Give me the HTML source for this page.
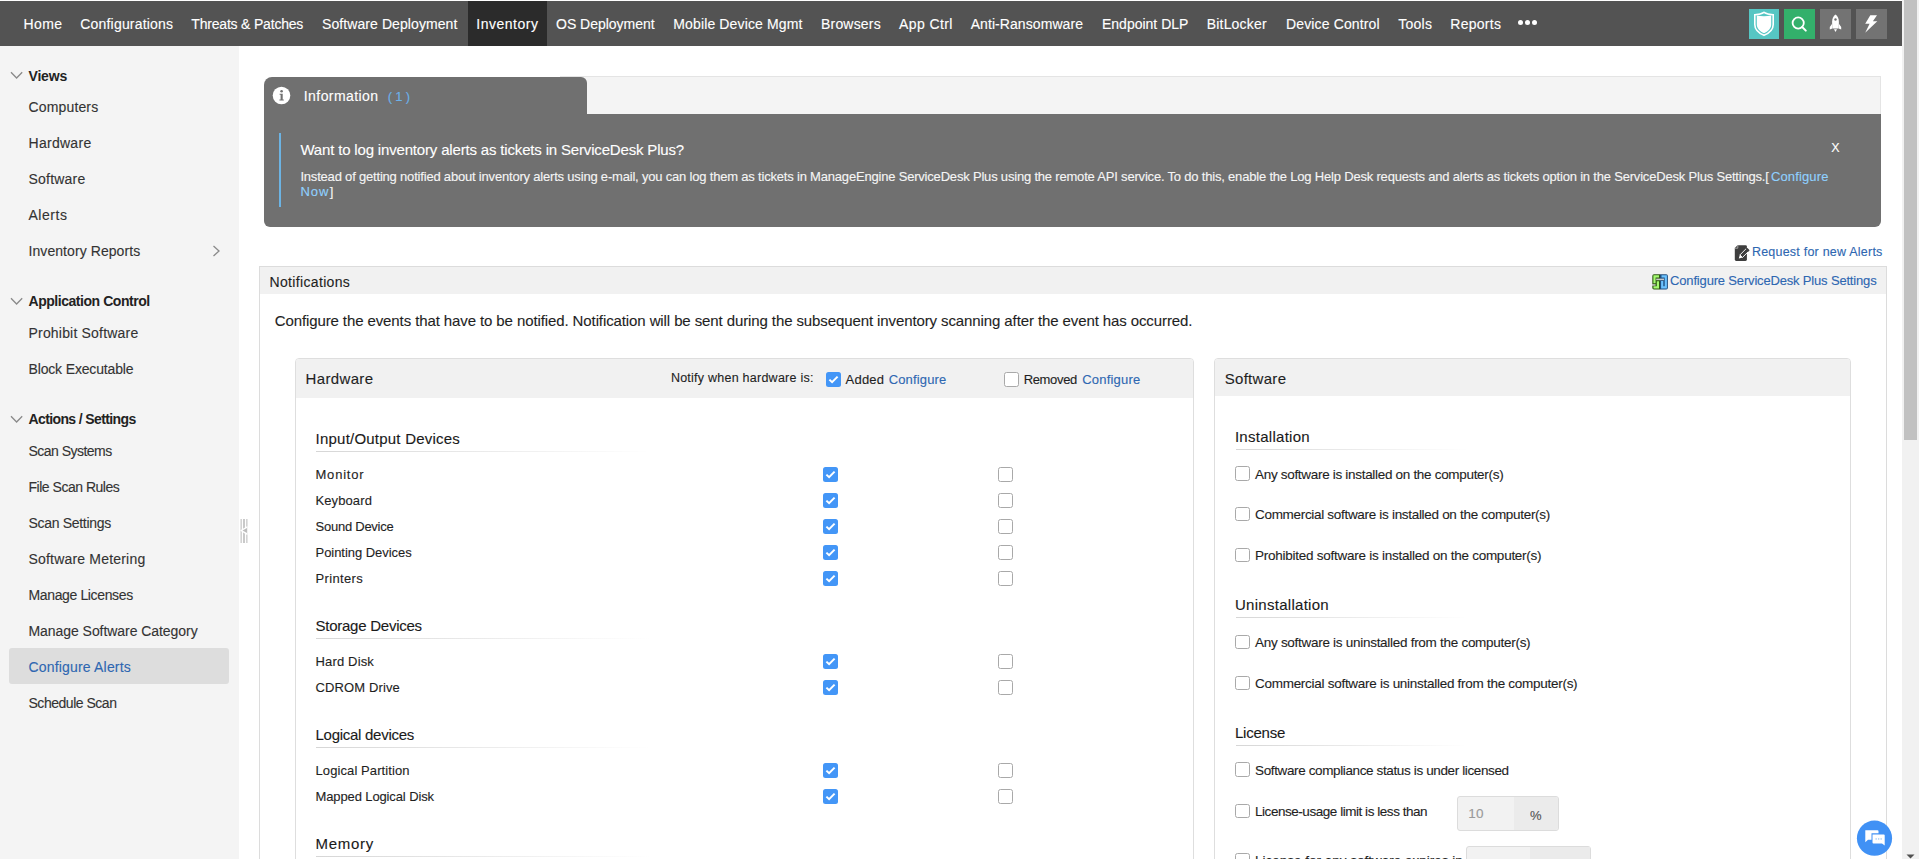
<!DOCTYPE html>
<html><head><meta charset="utf-8"><title>Configure Alerts</title>
<style>
html,body{margin:0;padding:0;width:1919px;height:859px;overflow:hidden;background:#fff;font-family:'Liberation Sans', sans-serif;}
div{box-sizing:border-box;white-space:nowrap;}
.t{-webkit-text-stroke:0.12px currentColor;}
</style></head><body>
<div style="position:absolute;left:0px;top:0px;width:1902px;height:1px;background:#fff"></div><div style="position:absolute;left:0px;top:1px;width:1902px;height:45px;background:#535353"></div><div style="position:absolute;left:468px;top:1px;width:79px;height:45px;background:#2b2b2b"></div><div style="position:absolute;left:1517.6px;top:19.7px;width:5.6px;height:5.6px;border-radius:50%;background:#fff"></div><div style="position:absolute;left:1524.8px;top:19.7px;width:5.6px;height:5.6px;border-radius:50%;background:#fff"></div><div style="position:absolute;left:1531.8px;top:19.7px;width:5.6px;height:5.6px;border-radius:50%;background:#fff"></div><div style="position:absolute;left:1749px;top:9px;width:30px;height:30px;background:#56c6c3"></div><div style="position:absolute;left:1784px;top:9px;width:31px;height:30px;background:#33b06b"></div><div style="position:absolute;left:1820px;top:9px;width:31px;height:30px;background:#737373"></div><div style="position:absolute;left:1856px;top:9px;width:31px;height:30px;background:#737373"></div><svg style="position:absolute;left:1749px;top:9px" width="30" height="30" viewBox="0 0 30 30">
<path d="M15 3.3 C12.5 5 9.5 5.6 5.8 5.8 L5.8 15.5 C5.8 20.5 9.5 24 15 26.3 C20.5 24 24.2 20.5 24.2 15.5 L24.2 5.8 C20.5 5.6 17.5 5 15 3.3 Z" fill="none" stroke="#fff" stroke-width="1.6"/>
<path d="M7.8 6.6 Q15 8 22.2 6.6 L22.2 15.5 C22.2 19.5 19 22.5 15 24.3 C11 22.5 7.8 19.5 7.8 15.5 Z" fill="#fff"/>
</svg><svg style="position:absolute;left:1784px;top:9px" width="31" height="30" viewBox="0 0 31 30">
<circle cx="14.2" cy="14" r="5.6" fill="none" stroke="#fff" stroke-width="1.8"/>
<line x1="18.2" y1="18" x2="21.8" y2="21.6" stroke="#fff" stroke-width="2" stroke-linecap="round"/>
</svg><svg style="position:absolute;left:1820px;top:9px" width="31" height="30" viewBox="0 0 31 30">
<path d="M15.5 5.4 C17.6 6.5 18.9 9.5 18.9 13 L18.6 19.4 L12.4 19.4 L12.1 13 C12.1 9.5 13.4 6.5 15.5 5.4 Z" fill="#fff"/>
<path d="M12.3 14.5 L9.8 18 L9.8 20.5 L12.3 19.5 Z M18.7 14.5 L21.2 18 L21.2 20.5 L18.7 19.5 Z" fill="#fff"/>
<circle cx="15.5" cy="10.5" r="1.2" fill="#737373"/>
<path d="M14 20.3 L17 20.3 L15.5 23 Z" fill="#fff"/>
</svg><svg style="position:absolute;left:1856px;top:9px" width="31" height="30" viewBox="0 0 31 30">
<path d="M14.3 6.2 L21 6.2 L16.9 12.3 L21.3 12.3 L9.2 23.8 L13.6 14.8 L9.2 14.8 Z" fill="#fff"/>
</svg><div style="position:absolute;left:1902px;top:0px;width:17px;height:859px;background:#f1f1f1"></div><div style="position:absolute;left:1904px;top:0px;width:13px;height:440px;background:#c1c1c1"></div><svg style="position:absolute;left:1902px;top:851px" width="17" height="9"><path d="M4.5 3.5 L12.5 3.5 L8.5 7.5 Z" fill="#505050"/></svg><div style="position:absolute;left:0px;top:46px;width:239px;height:813px;background:#f4f4f4"></div><div style="position:absolute;left:9px;top:648px;width:220px;height:36px;background:#dddddd;border-radius:3px"></div><svg style="position:absolute;left:10px;top:70.5px" width="14" height="9"><path d="M1 1.2 L6.6 7 L12.2 1.2" fill="none" stroke="#8a8a8a" stroke-width="1.3"/></svg><svg style="position:absolute;left:10px;top:297px" width="14" height="9"><path d="M1 1.2 L6.6 7 L12.2 1.2" fill="none" stroke="#8a8a8a" stroke-width="1.3"/></svg><svg style="position:absolute;left:10px;top:414.5px" width="14" height="9"><path d="M1 1.2 L6.6 7 L12.2 1.2" fill="none" stroke="#8a8a8a" stroke-width="1.3"/></svg><svg style="position:absolute;left:212px;top:245px" width="9" height="12"><path d="M1.5 1 L7 6 L1.5 11" fill="none" stroke="#8a8a8a" stroke-width="1.3"/></svg><svg style="position:absolute;left:240px;top:519px" width="8" height="24" viewBox="0 0 8 26" preserveAspectRatio="none">
<rect x="0.5" y="0" width="1.3" height="26" fill="#c9c9c9"/><rect x="3" y="0" width="2" height="26" fill="#c9c9c9"/><rect x="6.2" y="0" width="1.3" height="26" fill="#c9c9c9"/>
<path d="M0 12.5 L7.5 7.5 L7.5 17.5 Z" fill="#fff"/><path d="M2.5 12.5 L7 9.8 L7 15.2 Z" fill="#bdbdbd"/>
</svg><div style="position:absolute;left:560px;top:76px;width:1321px;height:38px;background:#f4f4f4;border-top:1px solid #e4e4e4;border-right:1px solid #e4e4e4"></div><div style="position:absolute;left:264px;top:77px;width:323px;height:40px;background:#707070;border-radius:8px 6px 0 0"></div><div style="position:absolute;left:264px;top:114px;width:1617px;height:113px;background:#707070;border-radius:0 0 6px 6px"></div><svg style="position:absolute;left:272px;top:86px" width="19" height="19" viewBox="0 0 19 19">
<circle cx="9.5" cy="9.5" r="8.8" fill="#fff"/>
<circle cx="9.6" cy="5.2" r="1.3" fill="#707070"/>
<path d="M7.6 7.8 L10.7 7.8 L10.7 13.6 L11.8 13.6 L11.8 14.6 L7.4 14.6 L7.4 13.6 L8.6 13.6 L8.6 8.8 L7.6 8.8 Z" fill="#707070"/>
</svg><div style="position:absolute;left:279px;top:133px;width:2.4px;height:74px;background:#6cb3e3"></div><svg style="position:absolute;left:1734px;top:245px" width="16" height="17" viewBox="0 0 16 17">
<path d="M3.6 0.2 L11.5 0.2 Q12.9 0.2 12.9 1.6 L12.9 14.5 Q12.9 15.9 11.5 15.9 L2.2 15.9 Q0.8 15.9 0.8 14.5 L0.8 3 Z" fill="#3e3e3e"/>
<path d="M0.8 3.2 L3.8 3.2 L3.8 0.2" fill="none" stroke="#b0b0b0" stroke-width="0.9"/>
<g transform="rotate(45 9.2 9.2)"><rect x="7.4" y="3.4" width="3.6" height="8.6" fill="#3e3e3e" stroke="#fff" stroke-width="0.9"/><path d="M7.2 12 L9.2 15.4 L11.2 12 Z" fill="#fff"/><rect x="7.2" y="1.8" width="4" height="2.2" rx="1" fill="#3e3e3e"/></g>
</svg><div style="position:absolute;left:259px;top:266px;width:1628px;height:600px;border:1px solid #dcdcdc;background:#fff"></div><div style="position:absolute;left:260px;top:267px;width:1626px;height:27px;background:#f1f1f1"></div><svg style="position:absolute;left:1652px;top:274px" width="17" height="16" viewBox="0 0 17 16">
<path d="M0.3 2 Q0.3 0.3 2 0.3 L8 0.3 L8 15.5 L2 15.5 Q0.3 15.5 0.3 13.8 Z" fill="#2f5a12"/>
<path d="M8 0.3 L14.2 0.3 Q15.9 0.3 15.9 2 L15.9 13.8 Q15.9 15.5 14.2 15.5 L8 15.5 Z" fill="#1f4f80"/>
<path d="M7 2.4 L2.5 2.4 L2.5 9.3 M5.9 7.3 L5.9 13.4 L1.5 13.4" fill="none" stroke="#a6fb72" stroke-width="2.2"/>
<path d="M9.5 2.4 L13.8 2.4 L13.8 13.4 L10.2 13.4 L10.2 7" fill="none" stroke="#6cc3ff" stroke-width="2.2"/>
<rect x="4.2" y="4.6" width="7.8" height="1.6" fill="#c9c9c9"/><rect x="0" y="10.2" width="3.6" height="1.5" fill="#c9c9c9"/>
</svg><div style="position:absolute;left:295px;top:358px;width:899px;height:520px;border:1px solid #dedede;border-radius:4px 4px 0 0;background:#fff"></div><div style="position:absolute;left:296px;top:359px;width:897px;height:39px;background:#f1f1f1;border-radius:3px 3px 0 0"></div><svg style="position:absolute;left:826px;top:372px" width="15" height="15" viewBox="0 0 15 15"><rect x="0" y="0" width="15" height="15" rx="2.5" fill="#4396f7"/><path d="M3.4 7.6 L6.1 10.2 L11.6 4.6" fill="none" stroke="#fff" stroke-width="2"/></svg><div style="position:absolute;left:1004px;top:372px;width:15px;height:15px;border:1px solid #a9a9a9;border-radius:2.5px;background:#fff"></div><div style="position:absolute;left:316.4px;top:451px;width:335px;height:1px;background:linear-gradient(to right,#d6d6d6,rgba(230,230,230,0.4) 75%,rgba(255,255,255,0))"></div><svg style="position:absolute;left:823px;top:467px" width="15" height="15" viewBox="0 0 15 15"><rect x="0" y="0" width="15" height="15" rx="2.5" fill="#4396f7"/><path d="M3.4 7.6 L6.1 10.2 L11.6 4.6" fill="none" stroke="#fff" stroke-width="2"/></svg><div style="position:absolute;left:998px;top:467px;width:15px;height:15px;border:1px solid #a9a9a9;border-radius:2.5px;background:#fff"></div><svg style="position:absolute;left:823px;top:493px" width="15" height="15" viewBox="0 0 15 15"><rect x="0" y="0" width="15" height="15" rx="2.5" fill="#4396f7"/><path d="M3.4 7.6 L6.1 10.2 L11.6 4.6" fill="none" stroke="#fff" stroke-width="2"/></svg><div style="position:absolute;left:998px;top:493px;width:15px;height:15px;border:1px solid #a9a9a9;border-radius:2.5px;background:#fff"></div><svg style="position:absolute;left:823px;top:519px" width="15" height="15" viewBox="0 0 15 15"><rect x="0" y="0" width="15" height="15" rx="2.5" fill="#4396f7"/><path d="M3.4 7.6 L6.1 10.2 L11.6 4.6" fill="none" stroke="#fff" stroke-width="2"/></svg><div style="position:absolute;left:998px;top:519px;width:15px;height:15px;border:1px solid #a9a9a9;border-radius:2.5px;background:#fff"></div><svg style="position:absolute;left:823px;top:545px" width="15" height="15" viewBox="0 0 15 15"><rect x="0" y="0" width="15" height="15" rx="2.5" fill="#4396f7"/><path d="M3.4 7.6 L6.1 10.2 L11.6 4.6" fill="none" stroke="#fff" stroke-width="2"/></svg><div style="position:absolute;left:998px;top:545px;width:15px;height:15px;border:1px solid #a9a9a9;border-radius:2.5px;background:#fff"></div><svg style="position:absolute;left:823px;top:571px" width="15" height="15" viewBox="0 0 15 15"><rect x="0" y="0" width="15" height="15" rx="2.5" fill="#4396f7"/><path d="M3.4 7.6 L6.1 10.2 L11.6 4.6" fill="none" stroke="#fff" stroke-width="2"/></svg><div style="position:absolute;left:998px;top:571px;width:15px;height:15px;border:1px solid #a9a9a9;border-radius:2.5px;background:#fff"></div><div style="position:absolute;left:316.3px;top:638px;width:335px;height:1px;background:linear-gradient(to right,#d6d6d6,rgba(230,230,230,0.4) 75%,rgba(255,255,255,0))"></div><svg style="position:absolute;left:823px;top:654px" width="15" height="15" viewBox="0 0 15 15"><rect x="0" y="0" width="15" height="15" rx="2.5" fill="#4396f7"/><path d="M3.4 7.6 L6.1 10.2 L11.6 4.6" fill="none" stroke="#fff" stroke-width="2"/></svg><div style="position:absolute;left:998px;top:654px;width:15px;height:15px;border:1px solid #a9a9a9;border-radius:2.5px;background:#fff"></div><svg style="position:absolute;left:823px;top:680px" width="15" height="15" viewBox="0 0 15 15"><rect x="0" y="0" width="15" height="15" rx="2.5" fill="#4396f7"/><path d="M3.4 7.6 L6.1 10.2 L11.6 4.6" fill="none" stroke="#fff" stroke-width="2"/></svg><div style="position:absolute;left:998px;top:680px;width:15px;height:15px;border:1px solid #a9a9a9;border-radius:2.5px;background:#fff"></div><div style="position:absolute;left:316.3px;top:747px;width:335px;height:1px;background:linear-gradient(to right,#d6d6d6,rgba(230,230,230,0.4) 75%,rgba(255,255,255,0))"></div><svg style="position:absolute;left:823px;top:763px" width="15" height="15" viewBox="0 0 15 15"><rect x="0" y="0" width="15" height="15" rx="2.5" fill="#4396f7"/><path d="M3.4 7.6 L6.1 10.2 L11.6 4.6" fill="none" stroke="#fff" stroke-width="2"/></svg><div style="position:absolute;left:998px;top:763px;width:15px;height:15px;border:1px solid #a9a9a9;border-radius:2.5px;background:#fff"></div><svg style="position:absolute;left:823px;top:789px" width="15" height="15" viewBox="0 0 15 15"><rect x="0" y="0" width="15" height="15" rx="2.5" fill="#4396f7"/><path d="M3.4 7.6 L6.1 10.2 L11.6 4.6" fill="none" stroke="#fff" stroke-width="2"/></svg><div style="position:absolute;left:998px;top:789px;width:15px;height:15px;border:1px solid #a9a9a9;border-radius:2.5px;background:#fff"></div><div style="position:absolute;left:316.3px;top:855.8px;width:335px;height:1px;background:linear-gradient(to right,#d6d6d6,rgba(230,230,230,0.4) 75%,rgba(255,255,255,0))"></div><div style="position:absolute;left:1214px;top:358px;width:637px;height:520px;border:1px solid #dedede;border-radius:4px 4px 0 0;background:#fff"></div><div style="position:absolute;left:1215px;top:359px;width:635px;height:37px;background:#f1f1f1;border-radius:3px 3px 0 0"></div><div style="position:absolute;left:1235.7px;top:449px;width:232px;height:1px;background:linear-gradient(to right,#d6d6d6,rgba(230,230,230,0.4) 75%,rgba(255,255,255,0))"></div><div style="position:absolute;left:1235px;top:466.3px;width:14.5px;height:14.5px;border:1px solid #a9a9a9;border-radius:2.5px;background:#fff"></div><div style="position:absolute;left:1235px;top:506.5px;width:14.5px;height:14.5px;border:1px solid #a9a9a9;border-radius:2.5px;background:#fff"></div><div style="position:absolute;left:1235px;top:547.5px;width:14.5px;height:14.5px;border:1px solid #a9a9a9;border-radius:2.5px;background:#fff"></div><div style="position:absolute;left:1235.7px;top:617px;width:232px;height:1px;background:linear-gradient(to right,#d6d6d6,rgba(230,230,230,0.4) 75%,rgba(255,255,255,0))"></div><div style="position:absolute;left:1235px;top:634.8px;width:14.5px;height:14.5px;border:1px solid #a9a9a9;border-radius:2.5px;background:#fff"></div><div style="position:absolute;left:1235px;top:675.7px;width:14.5px;height:14.5px;border:1px solid #a9a9a9;border-radius:2.5px;background:#fff"></div><div style="position:absolute;left:1235.7px;top:745px;width:232px;height:1px;background:linear-gradient(to right,#d6d6d6,rgba(230,230,230,0.4) 75%,rgba(255,255,255,0))"></div><div style="position:absolute;left:1235px;top:762.2px;width:14.5px;height:14.5px;border:1px solid #a9a9a9;border-radius:2.5px;background:#fff"></div><div style="position:absolute;left:1235px;top:803.5px;width:14.5px;height:14.5px;border:1px solid #a9a9a9;border-radius:2.5px;background:#fff"></div><div style="position:absolute;left:1457px;top:796px;width:102px;height:35px;border:1px solid #dcdcdc;border-radius:3px;background:#f2f2f2"></div><div style="position:absolute;left:1514px;top:797px;width:44px;height:33px;background:#ebebeb;border-radius:0 2px 2px 0"></div><div style="position:absolute;left:1235px;top:852.7px;width:14.5px;height:14.5px;border:1px solid #a9a9a9;border-radius:2.5px;background:#fff"></div><div style="position:absolute;left:1466px;top:846px;width:125px;height:35px;border:1px solid #dcdcdc;border-radius:3px;background:#f2f2f2"></div><div style="position:absolute;left:1530px;top:847px;width:60px;height:33px;background:#ebebeb"></div><svg style="position:absolute;left:1856px;top:819px" width="37" height="37" viewBox="0 -0.7 37 37">
<circle cx="18.5" cy="18.5" r="17.6" fill="#4091f5"/>
<path d="M9.3 10.5 L21.5 10.5 Q22.5 10.5 22.5 11.5 L22.5 13.5 L15.5 13.5 L15.5 20 L12 20 L9.3 22.5 Z" fill="#fff"/>
<path d="M16.5 14.7 L27.8 14.7 Q28.7 14.7 28.7 15.6 L28.7 25.8 L26 23.8 L17.5 23.8 Q16.5 23.8 16.5 22.8 Z" fill="#fff"/>
<rect x="19.5" y="18.6" width="1.3" height="1.3" fill="#9cc6f5"/><rect x="22" y="18.6" width="1.3" height="1.3" fill="#9cc6f5"/><rect x="24.5" y="18.6" width="1.3" height="1.3" fill="#9cc6f5"/>
</svg>
<div class="t" style="position:absolute;left:23.4px;top:14.85px;font-size:14px;line-height:18px;color:#ffffff;font-weight:normal;letter-spacing:0.440px;">Home</div><div class="t" style="position:absolute;left:80.3px;top:14.85px;font-size:14px;line-height:18px;color:#ffffff;font-weight:normal;letter-spacing:0.185px;">Configurations</div><div class="t" style="position:absolute;left:191.3px;top:14.85px;font-size:14px;line-height:18px;color:#ffffff;font-weight:normal;letter-spacing:-0.193px;">Threats &amp; Patches</div><div class="t" style="position:absolute;left:322.0px;top:14.85px;font-size:14px;line-height:18px;color:#ffffff;font-weight:normal;letter-spacing:0.085px;">Software Deployment</div><div class="t" style="position:absolute;left:476.3px;top:14.85px;font-size:14px;line-height:18px;color:#ffffff;font-weight:normal;letter-spacing:0.511px;">Inventory</div><div class="t" style="position:absolute;left:556.0px;top:14.85px;font-size:14px;line-height:18px;color:#ffffff;font-weight:normal;letter-spacing:-0.012px;">OS Deployment</div><div class="t" style="position:absolute;left:673.3px;top:14.85px;font-size:14px;line-height:18px;color:#ffffff;font-weight:normal;letter-spacing:0.132px;">Mobile Device Mgmt</div><div class="t" style="position:absolute;left:821.0px;top:14.85px;font-size:14px;line-height:18px;color:#ffffff;font-weight:normal;letter-spacing:0.189px;">Browsers</div><div class="t" style="position:absolute;left:899.0px;top:14.85px;font-size:14px;line-height:18px;color:#ffffff;font-weight:normal;letter-spacing:0.400px;">App Ctrl</div><div class="t" style="position:absolute;left:970.7px;top:14.85px;font-size:14px;line-height:18px;color:#ffffff;font-weight:normal;letter-spacing:0.072px;">Anti-Ransomware</div><div class="t" style="position:absolute;left:1102.0px;top:14.85px;font-size:14px;line-height:18px;color:#ffffff;font-weight:normal;letter-spacing:-0.002px;">Endpoint DLP</div><div class="t" style="position:absolute;left:1206.7px;top:14.85px;font-size:14px;line-height:18px;color:#ffffff;font-weight:normal;letter-spacing:0.203px;">BitLocker</div><div class="t" style="position:absolute;left:1286.0px;top:14.85px;font-size:14px;line-height:18px;color:#ffffff;font-weight:normal;letter-spacing:0.142px;">Device Control</div><div class="t" style="position:absolute;left:1398.3px;top:14.85px;font-size:14px;line-height:18px;color:#ffffff;font-weight:normal;letter-spacing:0.248px;">Tools</div><div class="t" style="position:absolute;left:1450.3px;top:14.85px;font-size:14px;line-height:18px;color:#ffffff;font-weight:normal;letter-spacing:0.275px;">Reports</div><div class="b" style="position:absolute;left:28.5px;top:66.55px;font-size:14px;line-height:18px;color:#222;font-weight:bold;letter-spacing:-0.189px;">Views</div><div class="t" style="position:absolute;left:28.5px;top:97.95px;font-size:14px;line-height:18px;color:#333333;font-weight:normal;letter-spacing:0.151px;">Computers</div><div class="t" style="position:absolute;left:28.5px;top:134.05px;font-size:14px;line-height:18px;color:#333333;font-weight:normal;letter-spacing:0.282px;">Hardware</div><div class="t" style="position:absolute;left:28.5px;top:170.05px;font-size:14px;line-height:18px;color:#333333;font-weight:normal;letter-spacing:0.204px;">Software</div><div class="t" style="position:absolute;left:28.5px;top:206.05px;font-size:14px;line-height:18px;color:#333333;font-weight:normal;letter-spacing:0.537px;">Alerts</div><div class="t" style="position:absolute;left:28.5px;top:242.15px;font-size:14px;line-height:18px;color:#333333;font-weight:normal;letter-spacing:0.074px;">Inventory Reports</div><div class="b" style="position:absolute;left:28.5px;top:291.65px;font-size:14px;line-height:18px;color:#222;font-weight:bold;letter-spacing:-0.456px;">Application Control</div><div class="t" style="position:absolute;left:28.5px;top:323.85px;font-size:14px;line-height:18px;color:#333333;font-weight:normal;letter-spacing:0.192px;">Prohibit Software</div><div class="t" style="position:absolute;left:28.5px;top:359.95px;font-size:14px;line-height:18px;color:#333333;font-weight:normal;letter-spacing:-0.155px;">Block Executable</div><div class="b" style="position:absolute;left:28.5px;top:410.15px;font-size:14px;line-height:18px;color:#222;font-weight:bold;letter-spacing:-0.621px;">Actions / Settings</div><div class="t" style="position:absolute;left:28.5px;top:442.15px;font-size:14px;line-height:18px;color:#333333;font-weight:normal;letter-spacing:-0.528px;">Scan Systems</div><div class="t" style="position:absolute;left:28.5px;top:478.15px;font-size:14px;line-height:18px;color:#333333;font-weight:normal;letter-spacing:-0.483px;">File Scan Rules</div><div class="t" style="position:absolute;left:28.5px;top:514.15px;font-size:14px;line-height:18px;color:#333333;font-weight:normal;letter-spacing:-0.309px;">Scan Settings</div><div class="t" style="position:absolute;left:28.5px;top:550.15px;font-size:14px;line-height:18px;color:#333333;font-weight:normal;letter-spacing:0.192px;">Software Metering</div><div class="t" style="position:absolute;left:28.5px;top:586.15px;font-size:14px;line-height:18px;color:#333333;font-weight:normal;letter-spacing:-0.362px;">Manage Licenses</div><div class="t" style="position:absolute;left:28.5px;top:622.15px;font-size:14px;line-height:18px;color:#333333;font-weight:normal;letter-spacing:-0.055px;">Manage Software Category</div><div class="t" style="position:absolute;left:28.5px;top:658.15px;font-size:14px;line-height:18px;color:#2e67b1;font-weight:normal;letter-spacing:0.178px;">Configure Alerts</div><div class="t" style="position:absolute;left:28.5px;top:694.15px;font-size:14px;line-height:18px;color:#333333;font-weight:normal;letter-spacing:-0.476px;">Schedule Scan</div><div class="t" style="position:absolute;left:303.8px;top:87.15px;font-size:14px;line-height:18px;color:#ffffff;font-weight:normal;letter-spacing:0.423px;">Information</div><div class="t" style="position:absolute;left:387.7px;top:88.20px;font-size:13px;line-height:17px;color:#6cb2ea;font-weight:normal;letter-spacing:-0.191px;">( 1 )</div><div class="t" style="position:absolute;left:300.4px;top:140.10px;font-size:15px;line-height:19px;color:#ffffff;font-weight:normal;letter-spacing:-0.169px;">Want to log inventory alerts as tickets in ServiceDesk Plus?</div><div class="t" style="position:absolute;left:300.4px;top:167.80px;font-size:13px;line-height:17px;color:#f5f5f5;font-weight:normal;letter-spacing:-0.193px;">Instead of getting notified about inventory alerts using e-mail, you can log them as tickets in ManageEngine ServiceDesk Plus using the remote API service. To do this, enable the Log Help Desk requests and alerts as tickets option in the ServiceDesk Plus Settings.[</div><div class="t" style="position:absolute;left:1770.9px;top:167.80px;font-size:13px;line-height:17px;color:#8fd0ff;font-weight:normal;letter-spacing:0.148px;">Configure</div><div class="t" style="position:absolute;left:300.4px;top:183.40px;font-size:13px;line-height:17px;color:#8fd0ff;font-weight:normal;letter-spacing:1.022px;">Now</div><div class="t" style="position:absolute;left:329.8px;top:183.40px;font-size:13px;line-height:17px;color:#f5f5f5;font-weight:normal;letter-spacing:0.000px;">]</div><div class="t" style="position:absolute;left:1831.2px;top:139.67px;font-size:12.5px;line-height:16px;color:#ffffff;font-weight:normal;letter-spacing:0.000px;">X</div><div class="t" style="position:absolute;left:1751.9px;top:243.57px;font-size:12.5px;line-height:16px;color:#2e67b1;font-weight:normal;letter-spacing:0.225px;">Request for new Alerts</div><div class="t" style="position:absolute;left:269.5px;top:272.55px;font-size:14px;line-height:18px;color:#1f1f1f;font-weight:normal;letter-spacing:0.343px;">Notifications</div><div class="t" style="position:absolute;left:1670.1px;top:271.90px;font-size:13px;line-height:17px;color:#2e67b1;font-weight:normal;letter-spacing:-0.173px;">Configure ServiceDesk Plus Settings</div><div class="t" style="position:absolute;left:274.7px;top:310.80px;font-size:15px;line-height:19px;color:#1f1f1f;font-weight:normal;letter-spacing:-0.102px;">Configure the events that have to be notified. Notification will be sent during the subsequent inventory scanning after the event has occurred.</div><div class="t" style="position:absolute;left:305.6px;top:369.30px;font-size:15px;line-height:19px;color:#1f1f1f;font-weight:normal;letter-spacing:0.338px;">Hardware</div><div class="t" style="position:absolute;left:670.9px;top:369.57px;font-size:12.5px;line-height:16px;color:#1f1f1f;font-weight:normal;letter-spacing:0.245px;">Notify when hardware is:</div><div class="t" style="position:absolute;left:845.5px;top:370.90px;font-size:13px;line-height:17px;color:#1f1f1f;font-weight:normal;letter-spacing:0.242px;">Added</div><div class="t" style="position:absolute;left:888.7px;top:370.90px;font-size:13px;line-height:17px;color:#2e67b1;font-weight:normal;letter-spacing:0.148px;">Configure</div><div class="t" style="position:absolute;left:1023.7px;top:370.90px;font-size:13px;line-height:17px;color:#1f1f1f;font-weight:normal;letter-spacing:-0.347px;">Removed</div><div class="t" style="position:absolute;left:1082.2px;top:370.90px;font-size:13px;line-height:17px;color:#2e67b1;font-weight:normal;letter-spacing:0.198px;">Configure</div><div class="t" style="position:absolute;left:315.6px;top:429.30px;font-size:15px;line-height:19px;color:#1a1a1a;font-weight:normal;letter-spacing:0.217px;">Input/Output Devices</div><div class="t" style="position:absolute;left:315.5px;top:466.00px;font-size:13px;line-height:17px;color:#1f1f1f;font-weight:normal;letter-spacing:0.783px;">Monitor</div><div class="t" style="position:absolute;left:315.5px;top:492.00px;font-size:13px;line-height:17px;color:#1f1f1f;font-weight:normal;letter-spacing:0.101px;">Keyboard</div><div class="t" style="position:absolute;left:315.5px;top:518.00px;font-size:13px;line-height:17px;color:#1f1f1f;font-weight:normal;letter-spacing:-0.245px;">Sound Device</div><div class="t" style="position:absolute;left:315.5px;top:544.00px;font-size:13px;line-height:17px;color:#1f1f1f;font-weight:normal;letter-spacing:-0.045px;">Pointing Devices</div><div class="t" style="position:absolute;left:315.5px;top:570.00px;font-size:13px;line-height:17px;color:#1f1f1f;font-weight:normal;letter-spacing:0.352px;">Printers</div><div class="t" style="position:absolute;left:315.5px;top:616.30px;font-size:15px;line-height:19px;color:#1a1a1a;font-weight:normal;letter-spacing:-0.247px;">Storage Devices</div><div class="t" style="position:absolute;left:315.5px;top:653.00px;font-size:13px;line-height:17px;color:#1f1f1f;font-weight:normal;letter-spacing:0.160px;">Hard Disk</div><div class="t" style="position:absolute;left:315.5px;top:679.00px;font-size:13px;line-height:17px;color:#1f1f1f;font-weight:normal;letter-spacing:0.120px;">CDROM Drive</div><div class="t" style="position:absolute;left:315.5px;top:725.30px;font-size:15px;line-height:19px;color:#1a1a1a;font-weight:normal;letter-spacing:-0.269px;">Logical devices</div><div class="t" style="position:absolute;left:315.5px;top:762.00px;font-size:13px;line-height:17px;color:#1f1f1f;font-weight:normal;letter-spacing:0.098px;">Logical Partition</div><div class="t" style="position:absolute;left:315.5px;top:788.00px;font-size:13px;line-height:17px;color:#1f1f1f;font-weight:normal;letter-spacing:-0.118px;">Mapped Logical Disk</div><div class="t" style="position:absolute;left:315.5px;top:834.10px;font-size:15px;line-height:19px;color:#1a1a1a;font-weight:normal;letter-spacing:0.726px;">Memory</div><div class="t" style="position:absolute;left:1224.7px;top:368.90px;font-size:15px;line-height:19px;color:#1f1f1f;font-weight:normal;letter-spacing:0.300px;">Software</div><div class="t" style="position:absolute;left:1234.9px;top:427.30px;font-size:15px;line-height:19px;color:#1a1a1a;font-weight:normal;letter-spacing:0.280px;">Installation</div><div class="t" style="position:absolute;left:1255.0px;top:466.22px;font-size:13.5px;line-height:17px;color:#1f1f1f;font-weight:normal;letter-spacing:-0.308px;">Any software is installed on the computer(s)</div><div class="t" style="position:absolute;left:1255.0px;top:506.02px;font-size:13.5px;line-height:17px;color:#1f1f1f;font-weight:normal;letter-spacing:-0.308px;">Commercial software is installed on the computer(s)</div><div class="t" style="position:absolute;left:1255.0px;top:546.82px;font-size:13.5px;line-height:17px;color:#1f1f1f;font-weight:normal;letter-spacing:-0.256px;">Prohibited software is installed on the computer(s)</div><div class="t" style="position:absolute;left:1234.9px;top:595.30px;font-size:15px;line-height:19px;color:#1a1a1a;font-weight:normal;letter-spacing:0.287px;">Uninstallation</div><div class="t" style="position:absolute;left:1255.0px;top:633.82px;font-size:13.5px;line-height:17px;color:#1f1f1f;font-weight:normal;letter-spacing:-0.282px;">Any software is uninstalled from the computer(s)</div><div class="t" style="position:absolute;left:1255.0px;top:674.82px;font-size:13.5px;line-height:17px;color:#1f1f1f;font-weight:normal;letter-spacing:-0.278px;">Commercial software is uninstalled from the computer(s)</div><div class="t" style="position:absolute;left:1234.9px;top:723.30px;font-size:15px;line-height:19px;color:#1a1a1a;font-weight:normal;letter-spacing:-0.201px;">License</div><div class="t" style="position:absolute;left:1255.0px;top:762.02px;font-size:13.5px;line-height:17px;color:#1f1f1f;font-weight:normal;letter-spacing:-0.373px;">Software compliance status is under licensed</div><div class="t" style="position:absolute;left:1255.0px;top:802.82px;font-size:13.5px;line-height:17px;color:#1f1f1f;font-weight:normal;letter-spacing:-0.459px;">License-usage limit is less than</div><div class="t" style="position:absolute;left:1468.2px;top:805.12px;font-size:13.5px;line-height:17px;color:#9a9a9a;font-weight:normal;letter-spacing:0.189px;">10</div><div class="t" style="position:absolute;left:1530.0px;top:806.50px;font-size:13px;line-height:17px;color:#555;font-weight:normal;letter-spacing:0.000px;">%</div><div class="t" style="position:absolute;left:1255.0px;top:852.32px;font-size:13.5px;line-height:17px;color:#1f1f1f;font-weight:normal;letter-spacing:0.000px;">License for any software expires in</div>
</body></html>
